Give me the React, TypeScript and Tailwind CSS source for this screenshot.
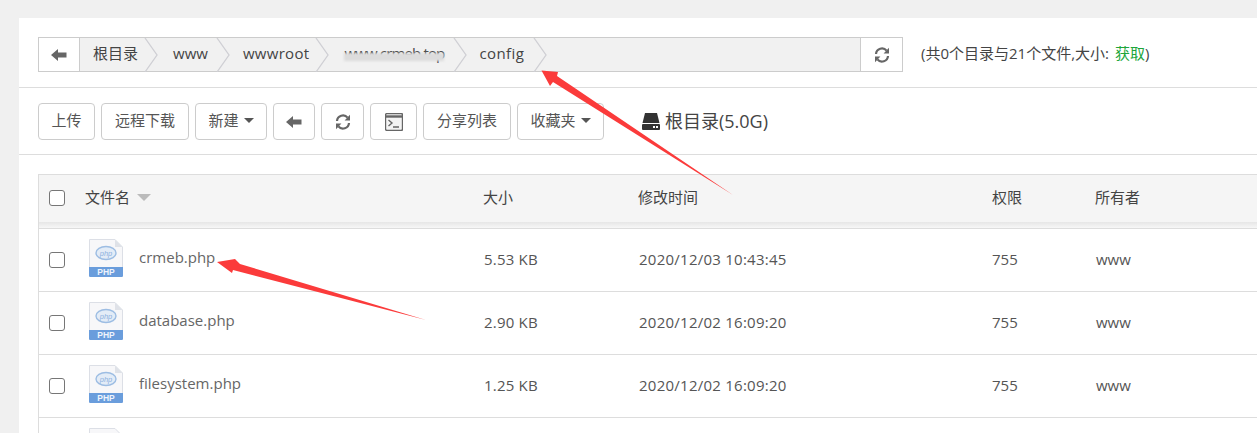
import React from 'react';

const fontStack = 'font-["Open_Sans","Noto_Sans_CJK_SC",sans-serif]';

const files = [
    {name: 'crmeb.php', size: '5.53 KB', time: '2020/12/03 10:43:45'},
    {name: 'database.php', size: '2.90 KB', time: '2020/12/02 16:09:20'},
    {name: 'filesystem.php', size: '1.25 KB', time: '2020/12/02 16:09:20'}
];

const Chevron = () => (
    <svg width="14" height="34" viewBox="0 0 14 34" className="shrink-0" fill="none">
        <path d="M1 0 L13 17 L1 34" stroke="#cfcfd4" strokeWidth="1.3"/>
    </svg>
);

const BackArrow = () => (
    <svg width="16" height="12" viewBox="0 0 16 12" fill="#666">
        <path d="M0 6 L7 0 V3.5 H15.5 V8.5 H7 V12 Z"/>
    </svg>
);

const Refresh = () => (
    <svg width="16" height="16" viewBox="0 0 16 16" fill="none" stroke="#666" strokeWidth="2.2">
        <path d="M2 7 A6 6 0 0 1 12.6 3.6"/>
        <path d="M14 9 A6 6 0 0 1 3.4 12.4"/>
        <path d="M15 0.8 V6.4 H9.6 Z" fill="#666" stroke="none"/>
        <path d="M1 15.2 V9.6 H6.4 Z" fill="#666" stroke="none"/>
    </svg>
);

const Caret = () => (
    <span className="ml-[5px] inline-block h-0 w-0 border-x-[5px] border-t-[5px] border-x-transparent border-t-[#555]"></span>
);

const ToolButton = ({children, className = ''}: {children: React.ReactNode; className?: string}) => (
    <div className={`flex h-[37px] items-center justify-center rounded-[4px] border border-[#ccc] bg-white text-[15px] text-[#555] ${className}`}>
        {children}
    </div>
);

const CheckBox = () => (
    <div className="h-4 w-4 rounded-[3px] border border-[#767676] bg-white"></div>
);

const PhpIcon = () => (
    <svg width="34" height="38" viewBox="0 0 34 38">
        <path d="M0.5 0.5 H26 L33.5 8 V37.5 H0.5 Z" fill="#f7f7f9" stroke="#dcdfe6"/>
        <path d="M26 0.5 V8 H33.5 Z" fill="#dfe2e8"/>
        <path d="M0 28 H34 V36.5 a1.5 1.5 0 0 1 -1.5 1.5 H1.5 a1.5 1.5 0 0 1 -1.5 -1.5 Z" fill="#6a9ddc"/>
        <ellipse cx="17" cy="14" rx="10" ry="6.5" fill="#e3ecf7" stroke="#9dbde3" strokeWidth="1.4"/>
        <text x="17" y="16.5" textAnchor="middle" fontSize="7.5" fontFamily="Liberation Sans, sans-serif" fontStyle="italic" fill="#8db1de">php</text>
        <text x="17" y="36" textAnchor="middle" fontSize="8.5" fontWeight="700" fontFamily="Liberation Sans, sans-serif" fill="#eef4fc">PHP</text>
    </svg>
);

const App = () => {
    return (
        <div className={`relative h-[433px] w-[1257px] overflow-hidden bg-[#f0f0f0] pl-[19px] pt-[18px] ${fontStack}`}>
            <div className="h-[415px] w-[1238px] bg-white">
                {/* path bar */}
                <div className="flex h-[70px] items-start border-b border-[#ddd] pl-[19px] pt-[19px]">
                    <div className="flex h-[35px] w-[865px] items-center border border-[#ccc] bg-[#f1f1f1]">
                        <div className="flex h-full w-[41px] shrink-0 items-center justify-center border-r border-[#ccc] bg-white">
                            <BackArrow/>
                        </div>
                        <div className="flex h-full min-w-0 flex-1 items-center pl-[13px] text-[15px] text-[#444]">
                            <span className="mr-[6px] pb-[2px]">根目录</span>
                            <Chevron/>
                            <span className="ml-[15px] mr-[8px] pb-[2px]">www</span>
                            <Chevron/>
                            <span className="ml-[13px] mr-[6px] pb-[2px] tracking-[0.3px]">wwwroot</span>
                            <Chevron/>
                            <span className="relative ml-[15px] mr-[9px] whitespace-nowrap pb-[2px] tracking-[-0.85px]">
                                www.crmeb.top
                                <span className="absolute inset-x-0 bottom-[6px] top-[11px] bg-[#dcdcdc] blur-[1px]"></span>
                            </span>
                            <Chevron/>
                            <span className="ml-[12px] mr-[9px] pb-[2px] tracking-[0.4px]">config</span>
                            <Chevron/>
                        </div>
                        <div className="flex h-full w-[42px] shrink-0 items-center justify-center border-l border-[#ccc] bg-white">
                            <Refresh/>
                        </div>
                    </div>
                    <div className="ml-[18px] flex h-[35px] items-center pb-[2px] text-[15px] text-[#444]">
                        (共0个目录与21个文件,大小:&nbsp;<span className="ml-[2px] text-[#20a53a]">获取</span>)
                    </div>
                </div>
                {/* toolbar */}
                <div className="flex h-[67px] items-start gap-[6px] border-b border-[#ddd] pl-[19px] pt-[15px]">
                    <ToolButton className="w-[57px] pb-[2px]">上传</ToolButton>
                    <ToolButton className="w-[88px] pb-[2px]">远程下载</ToolButton>
                    <ToolButton className="w-[72px] pb-[2px]">新建<Caret/></ToolButton>
                    <ToolButton className="w-[42px]"><BackArrow/></ToolButton>
                    <ToolButton className="w-[43px]"><Refresh/></ToolButton>
                    <ToolButton className="w-[47px]">
                        <svg width="18" height="18" viewBox="0 0 18 18" fill="none" stroke="#666">
                            <rect x="0.5" y="0.5" width="17" height="17" rx="1.5" fill="#f4f4f4" strokeWidth="1.4"/>
                            <path d="M0.5 3.5 H17.5" strokeWidth="2.4"/>
                            <path d="M3.5 7 L7 10 L3.5 13 M8 14 H14" strokeWidth="1.4"/>
                        </svg>
                    </ToolButton>
                    <ToolButton className="w-[88px] pb-[2px]">分享列表</ToolButton>
                    <ToolButton className="w-[87px] pb-[2px]">收藏夹<Caret/></ToolButton>
                    <div className="ml-[32px] flex h-[37px] items-center pb-[1px] text-[18px] text-[#444]">
                        <svg width="18" height="17" viewBox="0 0 18 17" className="mr-[5px]" fill="#333">
                            <path d="M3 0 H15 L17.5 10 H0.5 Z"/>
                            <rect x="0" y="11" width="18" height="6" rx="1"/>
                            <rect x="11" y="13" width="2" height="2" fill="#fff"/>
                            <rect x="14" y="13" width="2" height="2" fill="#fff"/>
                        </svg>
                        根目录(5.0G)
                    </div>
                </div>
                {/* file table */}
                <div className="ml-[19px] mt-[19px] border-l border-t border-[#ddd] text-[15px] text-[#555]">
                    <div className="grid h-[47px] grid-cols-[46px_398px_155px_354px_103px_1fr] items-center bg-[#f5f5f5] pb-[2px] text-[#444]">
                        <div className="flex pl-[10px]"><CheckBox/></div>
                        <div className="flex items-center">
                            文件名
                            <span className="ml-[7px] inline-block h-0 w-0 border-x-[7px] border-t-[7px] border-x-transparent border-t-[#bbb]"></span>
                        </div>
                        <div>大小</div>
                        <div>修改时间</div>
                        <div>权限</div>
                        <div>所有者</div>
                    </div>
                    <div className="h-[7px] border-b border-[#ddd] bg-gradient-to-b from-[#e6e6e6] to-[#f7f7f7]"></div>
                    {files.map(f => (
                        <div key={f.name} className="grid h-[63px] grid-cols-[46px_398px_155px_354px_103px_1fr] items-center border-b border-[#ddd]">
                            <div className="flex pl-[10px]"><CheckBox/></div>
                            <div className="flex items-center pb-[4px] pl-[4px]">
                                <PhpIcon/>
                                <span className="mb-[2px] ml-[16px] text-[#666]">{f.name}</span>
                            </div>
                            <div className="pb-[1px] pl-[1px] tracking-[0.2px]">{f.size}</div>
                            <div className="pb-[1px] pl-[1px] tracking-[0.25px]">{f.time}</div>
                            <div className="pb-[1px]">755</div>
                            <div className="pb-[1px] pl-[1px]">www</div>
                        </div>
                    ))}
                    {/* next row's icon, only its top shows above the fold */}
                    <div className="pl-[50px] pt-[10px]">
                        <svg width="34" height="6" viewBox="0 0 34 6">
                            <path d="M0.5 6 V0.5 H26 L31.5 6 Z" fill="#f7f7f9" stroke="#dcdfe6"/>
                        </svg>
                    </div>
                </div>
            </div>
            {/* annotation arrows drawn over the screenshot */}
            <svg className="absolute left-0 top-0" width="1257" height="433" viewBox="0 0 1257 433" fill="#fb3b3b">
                <path d="M541.5 70.5 L558 72 L557 76 L733 195 L553 82 L550 86 Z"/>
                <path d="M217 262 L235 259 L240 264 L426 320 L233 270 L232 273 Z"/>
            </svg>
        </div>
    );
};

export default App;
